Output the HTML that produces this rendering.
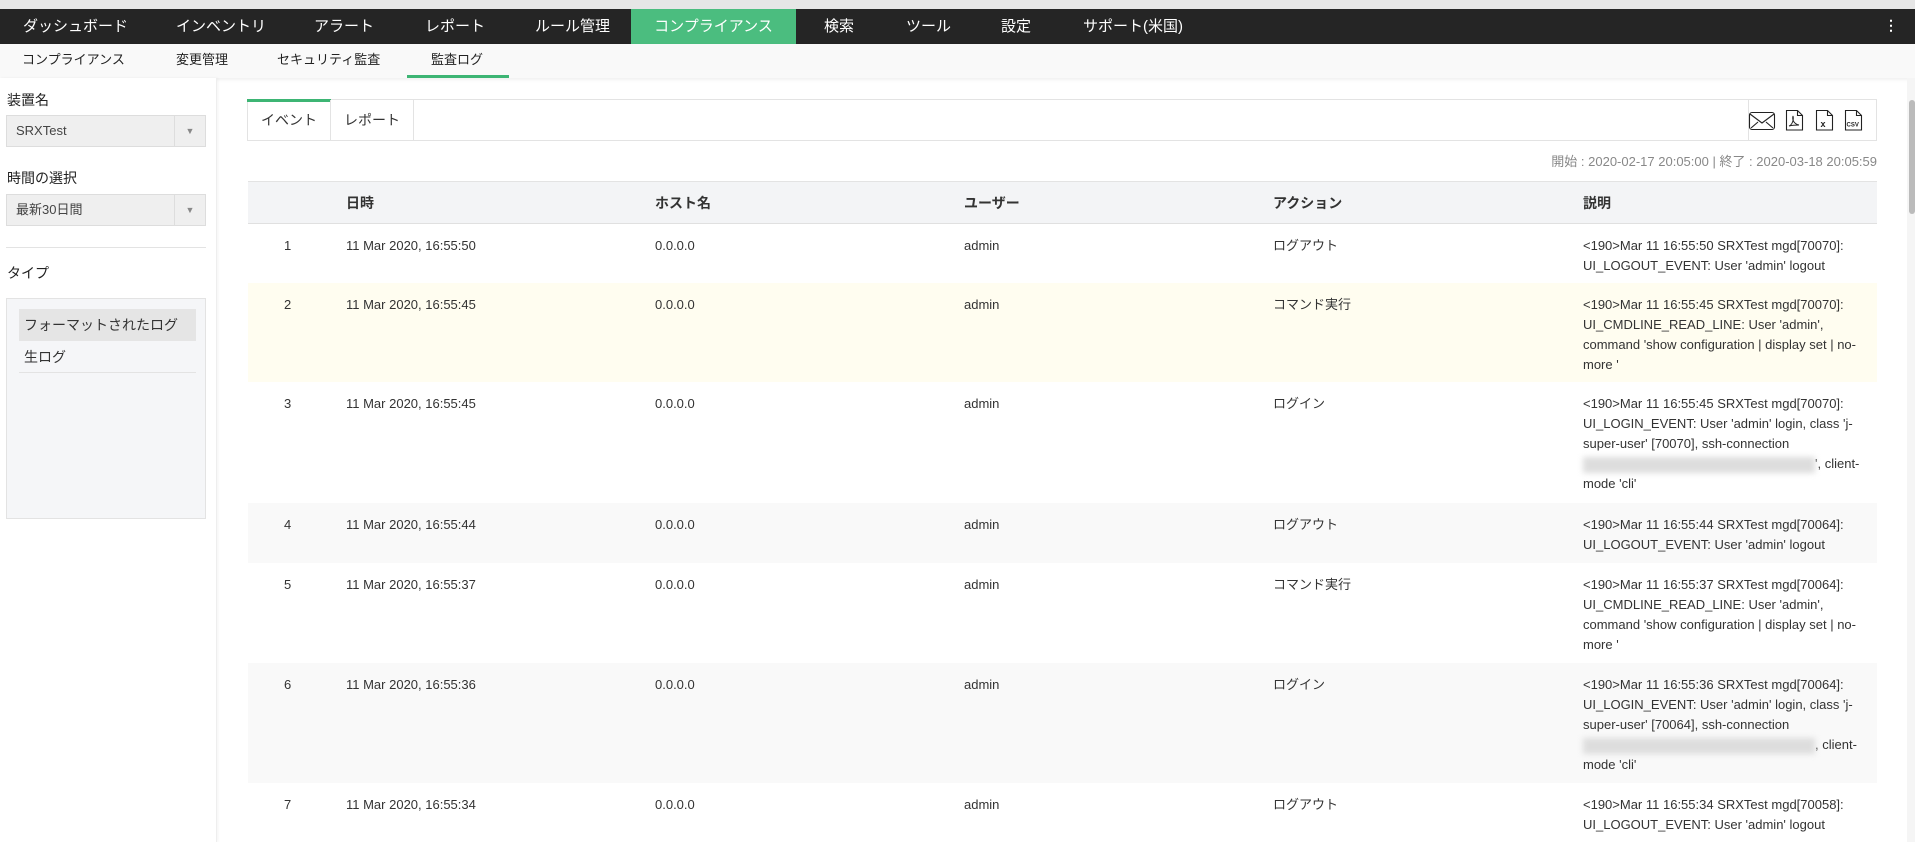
<!DOCTYPE html>
<html><head><meta charset="utf-8"><style>
*{margin:0;padding:0;box-sizing:border-box}
body{width:1915px;height:842px;overflow:hidden;background:#fff;font-family:"Liberation Sans","Noto Sans CJK JP",sans-serif;color:#333;position:relative;font-size:13px}
.a{position:absolute;white-space:nowrap}
#top{position:absolute;left:0;top:0;width:1915px;height:9px;background:#e6e6e6}
#nav{position:absolute;left:0;top:9px;width:1915px;height:35px;background:#252525}
#nav span{position:absolute;top:0;line-height:35px;color:#fff;font-size:15px}
#sub{position:absolute;left:0;top:44px;width:1915px;height:34px;background:#f9f9f9;box-shadow:0 2px 3px rgba(0,0,0,.06)}
#sub span{position:absolute;top:0;line-height:32px;font-size:13px;color:#222}
#side{position:absolute;left:0;top:78px;width:217px;height:764px;background:#fff;border-right:1px solid #eee;box-shadow:1px 0 3px rgba(0,0,0,.05)}
.lbl{position:absolute;left:7px;font-size:14px;color:#222}
.sel{position:absolute;left:6px;width:200px;height:32px;background:#efefef;border:1px solid #ddd;font-size:13px;line-height:30px;padding-left:9px;color:#444}
.sel i{position:absolute;right:0;top:0;width:31px;height:30px;border-left:1px solid #ddd;font-style:normal;font-size:9px;color:#888;text-align:center;line-height:30px}
.row{position:absolute;left:248px;width:1629px;border-bottom:0}
.row div{position:absolute;top:12px;line-height:20px;font-size:13px;color:#333}
.c0{left:36px;width:10px}
.c1{left:98px}.c2{left:407px}.c3{left:716px}.c4{left:1025px}
.c5{left:1335px;width:280px;white-space:normal}
.bl{display:inline-block;width:232px;height:16px;background:#ddd;filter:blur(3px);vertical-align:middle}
</style></head><body>
<div id="top"></div>
<div id="nav">
<span style="left:23px">ダッシュボード</span>
<span style="left:176px">インベントリ</span>
<span style="left:314px">アラート</span>
<span style="left:425px">レポート</span>
<span style="left:535px">ルール管理</span>
<span style="left:631px;width:165px;background:#4bbd7f;text-align:center">コンプライアンス</span>
<span style="left:824px">検索</span>
<span style="left:906px">ツール</span>
<span style="left:1001px">設定</span>
<span style="left:1083px">サポート(米国)</span>
<span style="left:1884px;font-size:14px;line-height:33px;font-weight:bold">⋮</span>
</div>
<div id="sub">
<span style="left:22px">コンプライアンス</span>
<span style="left:176px">変更管理</span>
<span style="left:277px">セキュリティ監査</span>
<span style="left:431px">監査ログ</span>
<div class="a" style="left:407px;top:31px;width:102px;height:3px;background:#3db574"></div>
</div>
<div id="side">
<div class="lbl" style="top:12px">装置名</div>
<div class="sel" style="top:37px">SRXTest<i>▼</i></div>
<div class="lbl" style="top:90px">時間の選択</div>
<div class="sel" style="top:116px">最新30日間<i>▼</i></div>
<div class="a" style="left:6px;top:169px;width:200px;height:1px;background:#e3e3e3"></div>
<div class="lbl" style="top:185px">タイプ</div>
<div class="a" style="left:6px;top:220px;width:200px;height:221px;background:#f5f6f8;border:1px solid #e3e3e3">
<div class="a" style="left:12px;top:10px;width:177px;height:32px;background:#e5e5e5;line-height:32px;padding-left:5px;font-size:14px">フォーマットされたログ</div>
<div class="a" style="left:12px;top:42px;width:177px;height:32px;border-bottom:1px solid #e3e3e3;line-height:32px;padding-left:5px;font-size:14px">生ログ</div>
</div>
</div>
<!-- tab bar -->
<div class="a" style="left:247px;top:99px;width:1630px;height:42px;border:1px solid #e3e3e3;background:#fff">
<div class="a" style="left:-1px;top:-1px;width:84px;height:3px;background:#3db574"></div>
<div class="a" style="left:0;top:0;width:83px;height:40px;border-right:1px solid #e3e3e3;line-height:40px;text-align:center;font-size:14px">イベント</div>
<div class="a" style="left:83px;top:0;width:83px;height:40px;border-right:1px solid #e3e3e3;line-height:40px;text-align:center;font-size:14px">レポート</div>
<div class="a" style="left:1500px;top:0;width:1px;height:40px;background:#e3e3e3"></div>
<svg class="a" style="left:1489px;top:9px" width="128" height="22" viewBox="0 0 128 22" fill="none" stroke="#222" stroke-width="1.1">
<rect x="12.5" y="3.5" width="25" height="17" rx="2.5"/><path d="M13 5l12 9 12-9M14 19l7-6M36 19l-7-6"/>
<path d="M49.5 1.5h11l5 5v14.5h-16z M60.5 1.5v5h5"/><path d="M52 17c3-1 5-6 4-10-1 4 1 8 6 9-3 0-6 0-10 1z" stroke-width="1"/>
<path d="M79.5 1.5h11l5 5v14.5h-16z M90.5 1.5v5h5"/><text x="83.5" y="18" font-size="9" font-weight="bold" fill="#222" stroke="none" font-family="Liberation Sans">x</text>
<path d="M108.5 1.5h11l5 5v14.5h-16z M119.5 1.5v5h5"/><text x="109.5" y="17.5" font-size="6" font-weight="bold" fill="#222" stroke="none" font-family="Liberation Sans">CSV</text>
</svg>
</div>
<div class="a" style="right:38px;top:151px;font-size:13px;color:#888">開始 : 2020-02-17 20:05:00 | 終了 : 2020-03-18 20:05:59</div>
<!-- table -->
<div class="a" style="left:248px;top:181px;width:1629px;height:661px;border:1px solid #e3e3e3;border-bottom:0"></div>
<div class="row" style="top:182px;height:42px;background:#f3f4f6;border-bottom:1px solid #e0e0e0">
<div class="c1" style="top:11px;font-weight:bold;font-size:14px">日時</div>
<div class="c2" style="top:11px;font-weight:bold;font-size:14px">ホスト名</div>
<div class="c3" style="top:11px;font-weight:bold;font-size:14px">ユーザー</div>
<div class="c4" style="top:11px;font-weight:bold;font-size:14px">アクション</div>
<div class="c5" style="top:11px;font-weight:bold;font-size:14px">説明</div>
</div>
<div class="row" style="top:224px;height:59px;background:#fff">
<div class="c0">1</div><div class="c1">11 Mar 2020, 16:55:50</div><div class="c2">0.0.0.0</div><div class="c3">admin</div><div class="c4">ログアウト</div>
<div class="c5">&lt;190&gt;Mar 11 16:55:50 SRXTest mgd[70070]: UI_LOGOUT_EVENT: User 'admin' logout</div></div>
<div class="row" style="top:283px;height:99px;background:#fffdf0">
<div class="c0">2</div><div class="c1">11 Mar 2020, 16:55:45</div><div class="c2">0.0.0.0</div><div class="c3">admin</div><div class="c4">コマンド実行</div>
<div class="c5">&lt;190&gt;Mar 11 16:55:45 SRXTest mgd[70070]: UI_CMDLINE_READ_LINE: User 'admin', command 'show configuration | display set | no-more '</div></div>
<div class="row" style="top:382px;height:121px;background:#fff">
<div class="c0">3</div><div class="c1">11 Mar 2020, 16:55:45</div><div class="c2">0.0.0.0</div><div class="c3">admin</div><div class="c4">ログイン</div>
<div class="c5">&lt;190&gt;Mar 11 16:55:45 SRXTest mgd[70070]: UI_LOGIN_EVENT: User 'admin' login, class 'j-super-user' [70070], ssh-connection <span class="bl"></span>', client-mode 'cli'</div></div>
<div class="row" style="top:503px;height:60px;background:#f9f9f9">
<div class="c0">4</div><div class="c1">11 Mar 2020, 16:55:44</div><div class="c2">0.0.0.0</div><div class="c3">admin</div><div class="c4">ログアウト</div>
<div class="c5">&lt;190&gt;Mar 11 16:55:44 SRXTest mgd[70064]: UI_LOGOUT_EVENT: User 'admin' logout</div></div>
<div class="row" style="top:563px;height:100px;background:#fff">
<div class="c0">5</div><div class="c1">11 Mar 2020, 16:55:37</div><div class="c2">0.0.0.0</div><div class="c3">admin</div><div class="c4">コマンド実行</div>
<div class="c5">&lt;190&gt;Mar 11 16:55:37 SRXTest mgd[70064]: UI_CMDLINE_READ_LINE: User 'admin', command 'show configuration | display set | no-more '</div></div>
<div class="row" style="top:663px;height:120px;background:#f9f9f9">
<div class="c0">6</div><div class="c1">11 Mar 2020, 16:55:36</div><div class="c2">0.0.0.0</div><div class="c3">admin</div><div class="c4">ログイン</div>
<div class="c5">&lt;190&gt;Mar 11 16:55:36 SRXTest mgd[70064]: UI_LOGIN_EVENT: User 'admin' login, class 'j-super-user' [70064], ssh-connection <span class="bl"></span>, client-mode 'cli'</div></div>
<div class="row" style="top:783px;height:59px;background:#fff">
<div class="c0">7</div><div class="c1">11 Mar 2020, 16:55:34</div><div class="c2">0.0.0.0</div><div class="c3">admin</div><div class="c4">ログアウト</div>
<div class="c5">&lt;190&gt;Mar 11 16:55:34 SRXTest mgd[70058]: UI_LOGOUT_EVENT: User 'admin' logout</div></div>
<!-- scrollbar -->
<div class="a" style="left:1907px;top:78px;width:8px;height:764px;background:#f5f5f5"></div>
<div class="a" style="left:1909px;top:100px;width:6px;height:114px;background:#bbb;border-radius:3px"></div>
</body></html>
